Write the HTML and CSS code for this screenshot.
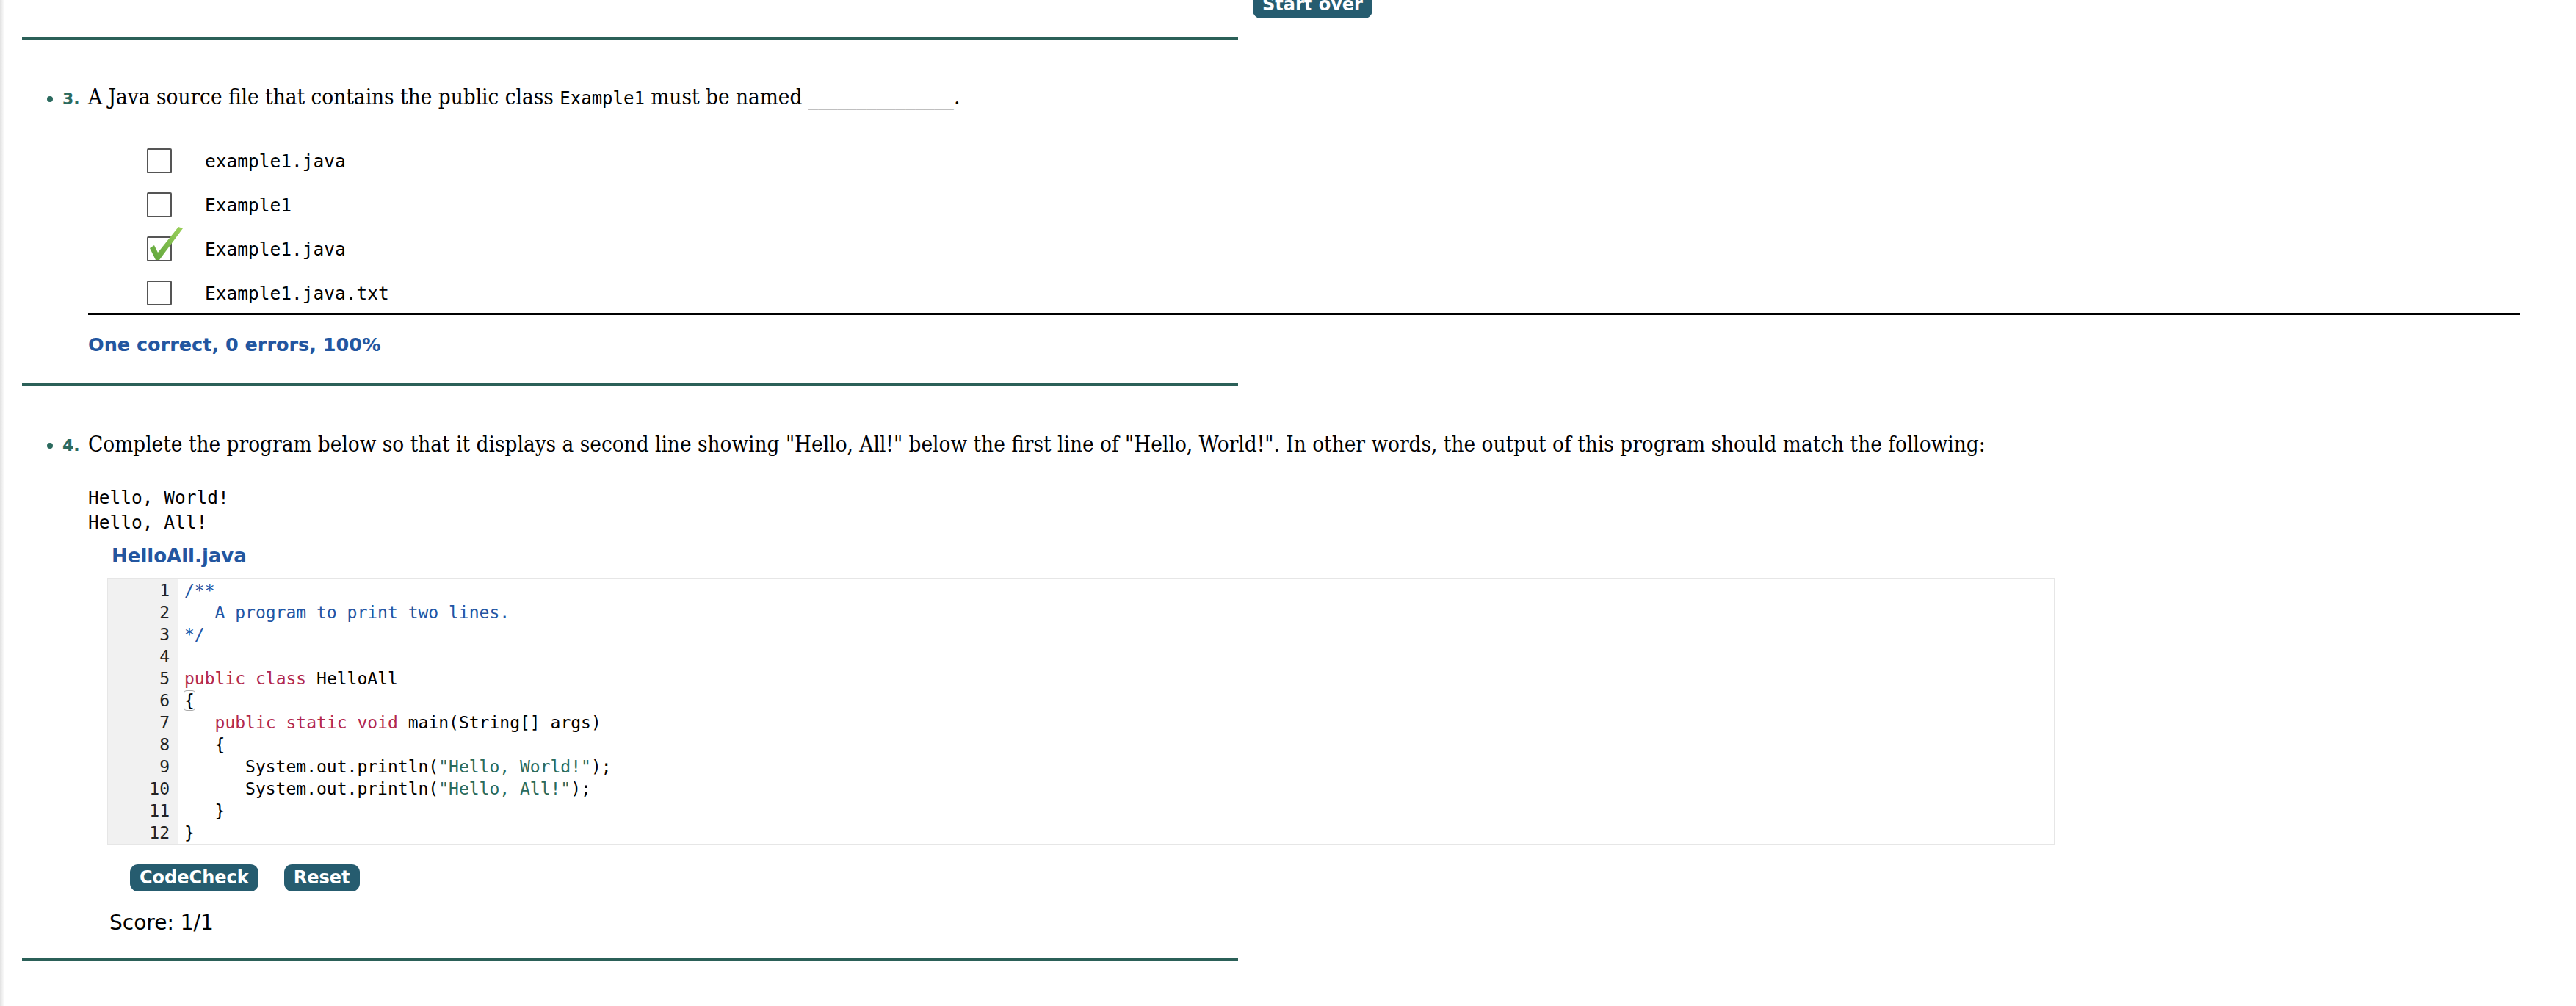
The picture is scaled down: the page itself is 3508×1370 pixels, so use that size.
FILE: index.html
```html
<!DOCTYPE html>
<html>
<head>
<meta charset="utf-8">
<title>Quiz</title>
<link rel="stylesheet" href="styles.css">
</head>
<body>
<div class="page">
  <div class="topbar"><button class="btn btn-start">Start over</button></div>
  <div class="rule"></div>

  <section class="question q3">
    <div class="prompt"><span class="dot"></span><span class="num">3.</span><span class="text">A Java source file that contains the public class <code class="inline">Example1</code> must be named _______________.</span></div>
    <ul class="options">
      <li class="option"><span class="box"></span><code class="opt-text">example1.java</code></li>
      <li class="option"><span class="box"></span><code class="opt-text">Example1</code></li>
      <li class="option"><span class="box"><svg class="check" viewBox="0 0 47 47" width="47" height="47"><defs><linearGradient id="cg" x1="0" y1="1" x2="1" y2="0"><stop offset="0" stop-color="#5ea43c"/><stop offset="1" stop-color="#9bd05a"/></linearGradient></defs><path d="M1 30 L7 26 L12 36 L40 1 L46 3 L14 46 L9 46 Z" fill="url(#cg)"/></svg></span><code class="opt-text">Example1.java</code></li>
      <li class="option"><span class="box"></span><code class="opt-text">Example1.java.txt</code></li>
    </ul>
    <div class="hr-black"></div>
    <div class="feedback">One correct, 0 errors, 100%</div>
  </section>

  <div class="rule"></div>

  <section class="question q4">
    <div class="prompt"><span class="dot"></span><span class="num">4.</span><span class="text">Complete the program below so that it displays a second line showing "Hello, All!" below the first line of "Hello, World!". In other words, the output of this program should match the following:</span></div>
    <pre class="output">Hello, World!
Hello, All!</pre>
    <div class="filename">HelloAll.java</div>
    <div class="editor">
      <div class="gutter"><div>1</div><div>2</div><div>3</div><div>4</div><div>5</div><div>6</div><div>7</div><div>8</div><div>9</div><div>10</div><div>11</div><div>12</div></div>
      <pre class="code"><span class="cm">/**</span>
<span class="cm">   A program to print two lines.</span>
<span class="cm">*/</span>

<span class="kw">public</span> <span class="kw">class</span> HelloAll
<span class="match">{</span>
   <span class="kw">public</span> <span class="kw">static</span> <span class="kw">void</span> main(String[] args)
   {
      System.out.println(<span class="str">"Hello, World!"</span>);
      System.out.println(<span class="str">"Hello, All!"</span>);
   }
}</pre>
    </div>
    <div class="buttons"><button class="btn">CodeCheck</button><button class="btn">Reset</button></div>
    <div class="score">Score: 1/1</div>
  </section>

  <div class="rule"></div>
</div>
</body>
</html>
```

FILE: styles.css
```css
html, body {
  margin: 0;
  padding: 0;
  background: #fff;
}

body {
  background: linear-gradient(to right, #e2e2e2 0, #efefef 3px, #ffffff 6px);
  min-height: 1370px;
  color: #000;
}

.page {
  display: flex;
  flex-direction: column;
  align-items: flex-start;
}

.topbar {
  height: 16px;
  padding-left: 1706px;
}

.btn {
  font-family: "DejaVu Sans", sans-serif;
  font-weight: bold;
  font-size: 24px;
  line-height: 37px;
  height: 37px;
  padding: 0 13px;
  margin: 0;
  border: none;
  border-radius: 11px;
  background: #265c6f;
  color: #fff;
  cursor: pointer;
}

.btn-start {
  margin-top: -21px;
  width: 163px;
  padding: 0;
}

.rule {
  margin-top: 34px;
  margin-left: 30px;
  width: 1656px;
  height: 4px;
  background: #2b6058;
}

.question {
  display: flex;
  flex-direction: column;
  align-items: flex-start;
}

.prompt {
  display: flex;
  align-items: center;
  margin-top: 59px;
  height: 40px;
  white-space: nowrap;
}

.dot {
  width: 8px;
  height: 8px;
  border-radius: 50%;
  background: #2b6a5e;
  margin-left: 64px;
  margin-top: 3px;
}

.num {
  font-family: "DejaVu Sans", sans-serif;
  font-weight: bold;
  font-size: 22px;
  color: #2b6a5e;
  margin-left: 13px;
  width: 35px;
  margin-top: 2px;
}

.text {
  font-family: "DejaVu Serif Condensed", "DejaVu Serif", serif;
  font-stretch: condensed;
  font-size: 29.4px;
  line-height: 40px;
}

.inline {
  font-family: "DejaVu Sans Mono", monospace;
  font-stretch: normal;
  font-size: 24px;
}

.options {
  list-style: none;
  margin: 49px 0 0 0;
  padding: 0;
  display: flex;
  flex-direction: column;
  gap: 26px;
}

.option {
  display: flex;
  align-items: center;
  height: 34px;
  padding-left: 200px;
}

.box {
  position: relative;
  width: 30px;
  height: 30px;
  border: 2px solid #555;
  border-radius: 2px;
  background: #fff;
  margin-right: 45px;
}

.check {
  position: absolute;
  left: 1px;
  top: -16px;
}

.opt-text {
  font-family: "DejaVu Sans Mono", monospace;
  font-size: 24.5px;
  color: #000;
}

.hr-black {
  margin-top: 10px;
  margin-left: 120px;
  width: 3312px;
  height: 3px;
  background: #000;
}

.feedback {
  margin-top: 20px;
  margin-left: 120px;
  font-family: "DejaVu Sans", sans-serif;
  font-weight: bold;
  font-size: 25.5px;
  line-height: 40px;
  color: #2356a0;
}

.q3 + .rule {
  margin-top: 33px;
}

.output {
  margin: 36px 0 0 120px;
  font-family: "DejaVu Sans Mono", monospace;
  font-size: 24.5px;
  line-height: 34px;
}

.filename {
  margin: 12px 0 0 152px;
  font-family: "DejaVu Sans", sans-serif;
  font-weight: bold;
  font-size: 26px;
  line-height: 32px;
  color: #2356a0;
}

.editor {
  margin: 14px 0 0 146px;
  width: 2650px;
  border: 1px solid #e6e6e6;
  display: flex;
  padding: 1px 0;
  background: #fff;
}

.gutter {
  width: 84px;
  padding-right: 12px;
  background: #f1f1f1;
  text-align: right;
  font-family: "DejaVu Sans Mono", monospace;
  font-size: 23px;
  line-height: 30px;
  color: #222;
  margin: -1px 0;
  padding-top: 1px;
  padding-bottom: 1px;
}

.code {
  margin: 0;
  padding-left: 8px;
  font-family: "DejaVu Sans Mono", monospace;
  font-size: 23px;
  line-height: 30px;
  color: #000;
}

.cm { color: #2255a4; }
.kw { color: #b3284d; }
.str { color: #2a6b5c; }

.match {
  outline: 1px solid #aaa;
  border-radius: 3px;
}

.buttons {
  margin: 26px 0 0 177px;
  display: flex;
  gap: 35px;
}

.score {
  margin: 25px 0 0 149px;
  font-family: "DejaVu Sans", sans-serif;
  font-size: 28px;
  line-height: 36px;
}

.q4 + .rule {
  margin-top: 30px;
}
```
